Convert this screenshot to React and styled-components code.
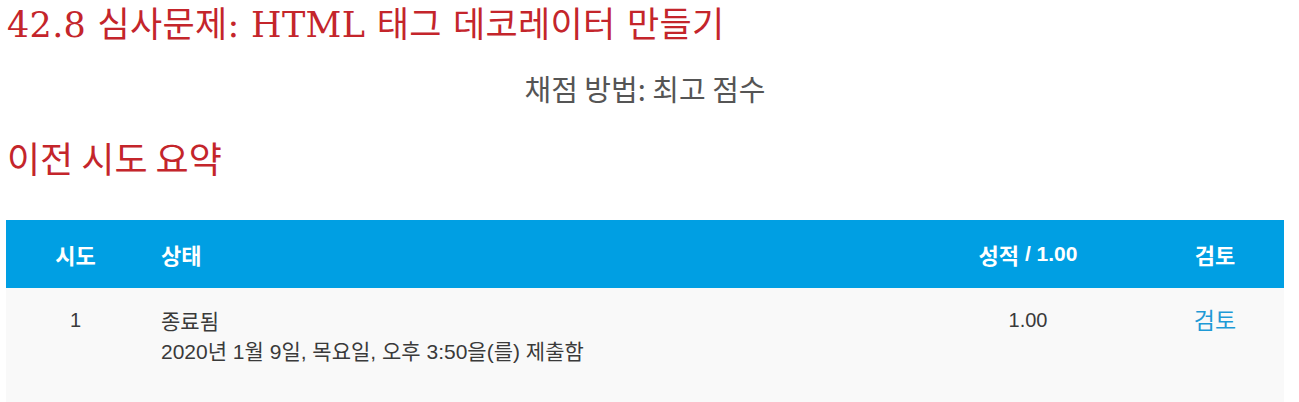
import styled, { createGlobalStyle } from 'styled-components'

const color = {
	red: '#c4252b',
	grey: '#555555',
	text: '#3a3a3a',
	blue: '#009fe3',
	link: '#1e9ad6',
	rowBg: '#f9f9f9',
}

const Global = createGlobalStyle`
	body {
		margin: 0;
		background: white;
		font-family: "Liberation Sans", "Noto Sans CJK KR", sans-serif;
	}
`

const Page = styled.div`
	padding: 0 15px 0 6px;
`

const Title = styled.h2`
	margin: 0;
	padding: 2px 0 0 1px;
	font-family: "DejaVu Serif", "Noto Sans CJK KR", serif;
	font-weight: normal;
	font-size: 35px;
	line-height: 46px;
	color: ${color.red};
	letter-spacing: 0.3px;
`

const Method = styled.p`
	margin: 22px 0 0;
	text-align: center;
	font-family: "Noto Sans CJK KR", sans-serif;
	font-size: 29px;
	line-height: 36px;
	color: ${color.grey};
`

const Heading = styled.h3`
	margin: 28px 0 0;
	padding-left: 1px;
	font-family: "Noto Sans CJK KR", sans-serif;
	font-weight: normal;
	font-size: 36px;
	line-height: 46px;
	color: ${color.red};
`

const Table = styled.div`
	margin-top: 40px;
	display: grid;
	grid-template-columns: 139px 1fr 236px 138px;
`

const HeadCell = styled.div`
	background: ${color.blue};
	color: white;
	font-family: "Liberation Sans", "Noto Sans CJK KR", sans-serif;
	font-weight: bold;
	font-size: 21px;
	height: 68px;
	display: flex;
	align-items: center;
	justify-content: ${p => (p.left ? 'flex-start' : 'center')};
	padding-left: ${p => (p.left ? '16px' : '0')};
`

const Korean = styled.span`
	font-family: "Noto Sans CJK KR", sans-serif;
	font-size: 22px;
`

const Cell = styled.div`
	background: ${color.rowBg};
	color: ${color.text};
	font-size: 20px;
	line-height: 26px;
	min-height: 114px;
	padding-top: 19px;
	text-align: ${p => (p.left ? 'left' : 'center')};
	padding-left: ${p => (p.left ? '16px' : '0')};
	box-sizing: border-box;
`

const State = styled.div`
	font-family: "Noto Sans CJK KR", sans-serif;
	font-size: 21px;
	line-height: 26px;
`

const Submitted = styled.div`
	margin-top: 6px;
	font-size: 21px;
	line-height: 26px;
`

const ReviewLink = styled.a`
	color: ${color.link};
	text-decoration: none;
	font-family: "Noto Sans CJK KR", sans-serif;
	font-size: 23px;
	line-height: 24px;
`

export default function App() {
	return (
		<Page>
			<Global />
			<Title>42.8 심사문제: HTML 태그 데코레이터 만들기</Title>
			<Method>채점 방법: 최고 점수</Method>
			<Heading>이전 시도 요약</Heading>
			<Table>
				<HeadCell><Korean>시도</Korean></HeadCell>
				<HeadCell left><Korean>상태</Korean></HeadCell>
				<HeadCell><Korean>성적</Korean>&nbsp;/ 1.00</HeadCell>
				<HeadCell><Korean>검토</Korean></HeadCell>

				<Cell>1</Cell>
				<Cell left>
					<State>종료됨</State>
					<Submitted>2020년 1월 9일, 목요일, 오후 3:50을(를) 제출함</Submitted>
				</Cell>
				<Cell>1.00</Cell>
				<Cell>
					<ReviewLink href="#">검토</ReviewLink>
				</Cell>
			</Table>
		</Page>
	)
}
